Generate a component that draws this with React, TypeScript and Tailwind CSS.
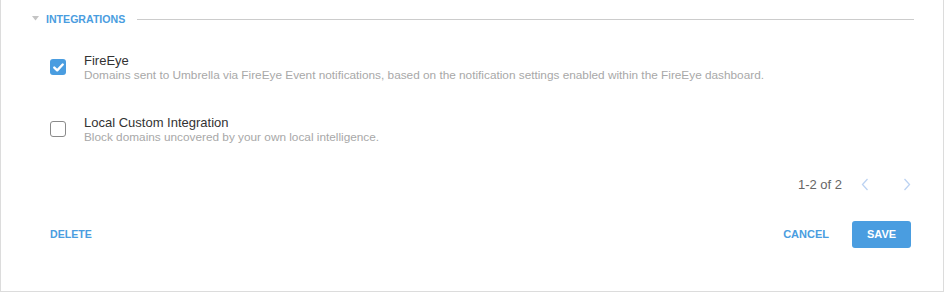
import React from "react";

export default function App() {
  return (
    <div
      className="w-[944px] h-[292px] border-l border-r border-b border-[#dcdcdc] bg-white flex flex-col"
      style={{ fontFamily: '"Liberation Sans", Arial, sans-serif' }}
    >
      <div className="flex items-center h-[37px] pt-[2px] pl-[31px] pr-[29px]">
        <svg width="7" height="5" viewBox="0 0 7 5" className="mr-[7px] mt-[-3px]">
          <path d="M0 0 L7 0 L3.5 4.5 Z" fill="#c4c4c4" />
        </svg>
        <span className="text-[10.6px] font-bold text-[#4a9de0] leading-none">INTEGRATIONS</span>
        <div className="flex-1 h-px bg-[#cccccc] ml-[12px]" />
      </div>

      <div className="flex flex-col pl-[49px] pt-[16px]">
        <div className="flex items-start">
          <div className="w-[16px] h-[16px] rounded-[3px] bg-[#4a9de0] flex items-center justify-center mt-[6px]">
            <svg width="11" height="9" viewBox="0 0 11 9">
              <path d="M1.3 4.6 L4.2 7.3 L9.7 1.5" stroke="white" strokeWidth="2.4" fill="none" strokeLinecap="round" strokeLinejoin="round" />
            </svg>
          </div>
          <div className="ml-[18px] flex flex-col">
            <span className="text-[13px] text-[#333] leading-[15px]">FireEye</span>
            <span className="text-[11.8px] text-[#a8a8a8] leading-[15px]">
              Domains sent to Umbrella via FireEye Event notifications, based on the notification settings enabled within the FireEye dashboard.
            </span>
          </div>
        </div>

        <div className="flex items-start mt-[32px]">
          <div className="w-[16px] h-[16px] rounded-[3px] border border-[#8a8a8a] bg-white mt-[6px]" />
          <div className="ml-[18px] flex flex-col">
            <span className="text-[13px] text-[#333] leading-[15px]">Local Custom Integration</span>
            <span className="text-[11.8px] text-[#a8a8a8] leading-[15px]">
              Block domains uncovered by your own local intelligence.
            </span>
          </div>
        </div>
      </div>

      <div className="flex items-center justify-end pr-[32px] mt-[31px] h-[16px]">
        <span className="text-[13px] text-[#666] leading-none">1-2 of 2</span>
        <svg width="8" height="13" viewBox="0 0 8 13" className="ml-[19px]">
          <path d="M6.5 1 L1.5 6.5 L6.5 12" stroke="#bcd3f2" strokeWidth="1.3" fill="none" />
        </svg>
        <svg width="8" height="13" viewBox="0 0 8 13" className="ml-[34px]">
          <path d="M1.5 1 L6.5 6.5 L1.5 12" stroke="#bcd3f2" strokeWidth="1.3" fill="none" />
        </svg>
      </div>

      <div className="flex items-center pl-[49px] pr-[32px] mt-[29px]">
        <span className="text-[10.6px] font-bold text-[#4a9de0] leading-none">DELETE</span>
        <div className="flex-1" />
        <span className="text-[11px] font-bold text-[#4a9de0] leading-none">CANCEL</span>
        <div className="ml-[23px] w-[59px] h-[27px] rounded-[3px] bg-[#4a9de0] flex items-center justify-center">
          <span className="text-[11px] font-bold text-white leading-none">SAVE</span>
        </div>
      </div>
    </div>
  );
}
